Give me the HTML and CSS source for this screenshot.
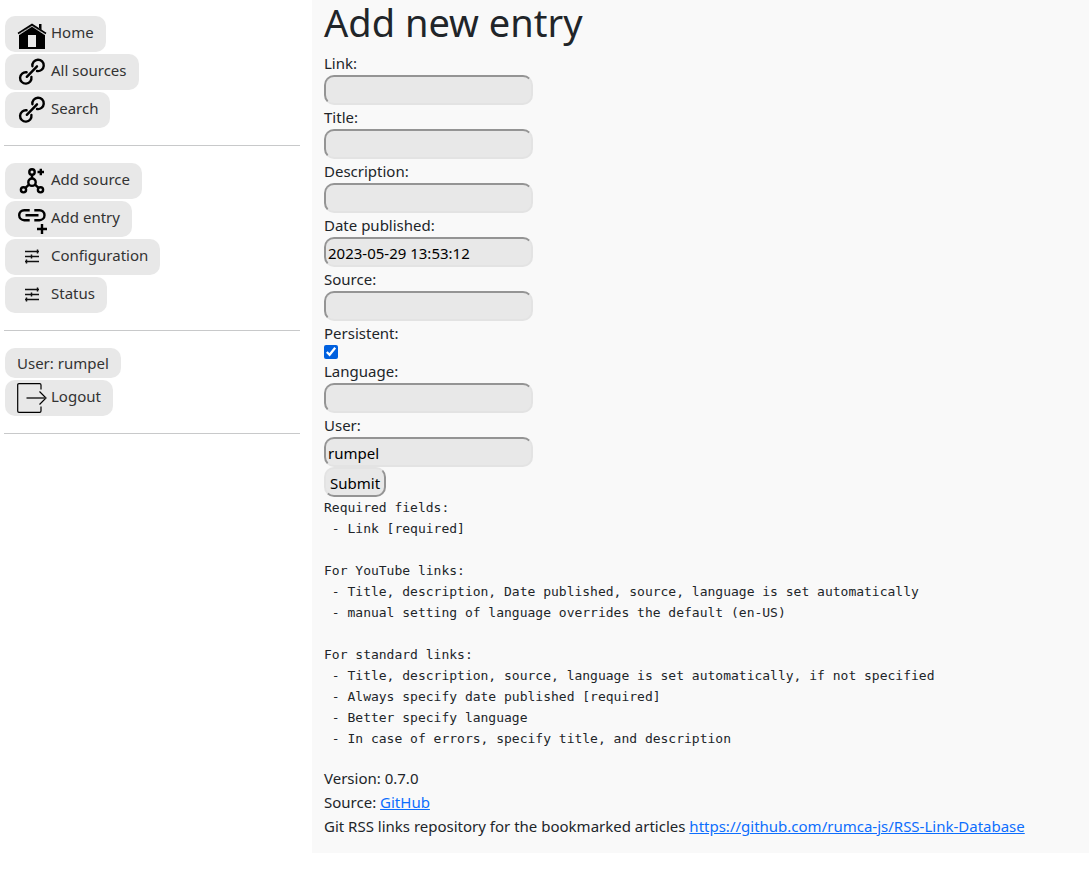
FILE: index.html
```html
<!DOCTYPE html>
<html lang="en">
<head>
<meta charset="utf-8">
<meta name="viewport" content="width=device-width, initial-scale=1">
<title>Add new entry</title>
<link rel="stylesheet" href="styles.css">
</head>
<body>
<svg class="sprite" aria-hidden="true">
  <symbol id="i-link" viewBox="0 0 30 30">
    <g fill="none" stroke="#000" stroke-width="2.4" stroke-linecap="round">
      <path d="M15.400 9.200A5.700 5.700 0 1 1 20 14"/>
      <path d="M14.400 20A5.700 5.700 0 1 1 9.600 15.300"/>
      <path d="M9.800 19.800 20 9.300"/>
    </g>
  </symbol>
  <symbol id="i-sliders" viewBox="0 0 30 30">
    <path d="M8 9.500h14M8 14.500h14M8 19.500h14" stroke="#111" stroke-width="1.700"/>
    <path d="M20.500 7.500v4M14.500 12.500v4M9.500 17.500v4" stroke="#111" stroke-width="1.500"/>
  </symbol>
</svg>
<div class="layout">
  <nav class="sidebar">
    <div class="group">
      <a class="nav-btn with-icon" href="#"><svg class="icon" viewBox="0 0 30 30"><path d="M22 5h2.500v6L22 9zM2 15h26v15H2z"/><path d="M3 15 15 6l12 9z"/><path d="M1 14.500 15 5.500 29 14.500" fill="none" stroke="#000" stroke-width="1.500"/><path d="M2 15.800 15 7.300l13 8.500" fill="none" stroke="#e8e8e8" stroke-width=".8"/><path d="M11 16h8v12h-8z" fill="#e8e8e8"/></svg>Home</a>
      <a class="nav-btn with-icon" href="#"><svg class="icon"><use href="#i-link"/></svg>All sources</a>
      <a class="nav-btn with-icon" href="#"><svg class="icon"><use href="#i-link"/></svg>Search</a>
    </div>
    <hr>
    <div class="group">
      <a class="nav-btn with-icon" href="#"><svg class="icon" viewBox="0 0 30 30"><g fill="none" stroke="#000" stroke-width="2.4"><circle cx="15" cy="6" r="2.700"/><circle cx="15" cy="16.200" r="3.700"/><circle cx="6.500" cy="23.800" r="2.600"/><circle cx="23.500" cy="23.800" r="2.600"/><path d="M15 9v3M12 18.700l-3.300 2.900M18 18.700l3.300 2.900M20.500 6H27M23.800 2.800v6.400"/></g></svg>Add source</a>
      <a class="nav-btn with-icon" href="#"><svg class="icon" viewBox="0 0 30 30"><g fill="none" stroke="#000" stroke-width="2.400"><path d="M12.700 6.200H7.200a5 5 0 0 0 0 10h5.500M17.300 6.200h5.200a5 5 0 0 1 0 10h-5.200M8.500 11.200h13M20 25h10M25 20v10"/></g></svg>Add entry</a>
      <a class="nav-btn with-icon" href="#"><svg class="icon"><use href="#i-sliders"/></svg>Configuration</a>
      <a class="nav-btn with-icon" href="#"><svg class="icon"><use href="#i-sliders"/></svg>Status</a>
    </div>
    <hr>
    <div class="group">
      <a class="nav-btn" href="#">User: rumpel</a>
      <a class="nav-btn with-icon" href="#"><svg class="icon" viewBox="0 0 30 30"><g fill="none" stroke="#000" stroke-width="1.2"><path d="M24 6.500V2q0-1.300-1.300-1.300H2Q.7.7.7 2v26q0 1.300 1.300 1.300h20.700q1.300 0 1.300-1.300v-4.500"/><path d="M22.500 8.500 29 15l-6.500 6.500"/></g><path d="M9.500 15H29" stroke="#333" stroke-width="1.600"/></svg>Logout</a>
    </div>
    <hr>
  </nav>
  <main class="content">
    <h1>Add new entry</h1>
    <form class="entry-form">
      <label for="link">Link:</label>
      <input class="field" type="text" id="link">
      <label for="title">Title:</label>
      <input class="field" type="text" id="title">
      <label for="description">Description:</label>
      <input class="field" type="text" id="description">
      <label for="date">Date published:</label>
      <input class="field" type="text" id="date" value="2023-05-29 13:53:12">
      <label for="source">Source:</label>
      <input class="field" type="text" id="source">
      <label for="persistent">Persistent:</label>
      <input class="check" type="checkbox" id="persistent" checked>
      <label for="language">Language:</label>
      <input class="field" type="text" id="language">
      <label for="user">User:</label>
      <input class="field" type="text" id="user" value="rumpel">
      <button class="submit" type="submit">Submit</button>
    </form>
    <pre class="help">Required fields:
 - Link [required]

For YouTube links:
 - Title, description, Date published, source, language is set automatically
 - manual setting of language overrides the default (en-US)

For standard links:
 - Title, description, source, language is set automatically, if not specified
 - Always specify date published [required]
 - Better specify language
 - In case of errors, specify title, and description</pre>
    <footer>
      <div>Version: 0.7.0</div>
      <div>Source: <a href="#">GitHub</a></div>
      <div>Git RSS links repository for the bookmarked articles <a href="#">https://github.com/rumca-js/RSS-Link-Database</a></div>
    </footer>
  </main>
</div>
</body>
</html>
```
FILE: styles.css
```css
* { box-sizing: border-box; }
body {
  margin: 0;
  background: #fff;
  color: #212529;
  font: 15px/24px "Noto Sans", "Open Sans", sans-serif;
}
.sprite { display: none; }
.layout {
  display: grid;
  grid-template-columns: 312px minmax(0, 1fr);
  align-items: start;
}
.sidebar { padding: 16px 12px 0 4px; }
.sidebar hr {
  margin: 17px 0;
  border: 0;
  border-top: 1px solid #c8c9ca;
}
.group {
  display: flex;
  flex-direction: column;
  align-items: flex-start;
  gap: 2px;
  padding-left: 1px;
}
.nav-btn {
  display: flex;
  gap: 4px;
  padding: 3px 12px;
  border-radius: 10px;
  background: #e8e8e8;
  color: #333;
  text-decoration: none;
}
.with-icon { line-height: 27px; }
.icon { width: 30px; height: 30px; }
.content {
  padding: 0 12px 15px;
  background: #f9f9f9;
}
h1 {
  margin: 0 0 7px;
  font-size: 38px;
  line-height: 44px;
  font-weight: 400;
}
.entry-form {
  display: flex;
  flex-direction: column;
  align-items: flex-start;
}
.field, .submit {
  height: 30px;
  border-radius: 10px;
  background: #e8e8e8;
  color: #000;
  font: inherit;
}
.field {
  width: 209px;
  padding: 2px 2px 0;
  border: 2px solid;
  border-color: #949494 #e3e3e3 #e3e3e3 #949494;
}
.submit {
  padding: 2px 4px 0;
  border: 2px solid;
  border-color: #e3e3e3 #949494 #949494 #e3e3e3;
}
.check {
  width: 14px;
  height: 14px;
  margin: 0;
  accent-color: #0060df;
}
.help {
  margin: 0 0 17px;
  overflow: auto;
  font: 13px/21px "DejaVu Sans Mono", monospace;
}
footer a { color: #0d6efd; }
```
